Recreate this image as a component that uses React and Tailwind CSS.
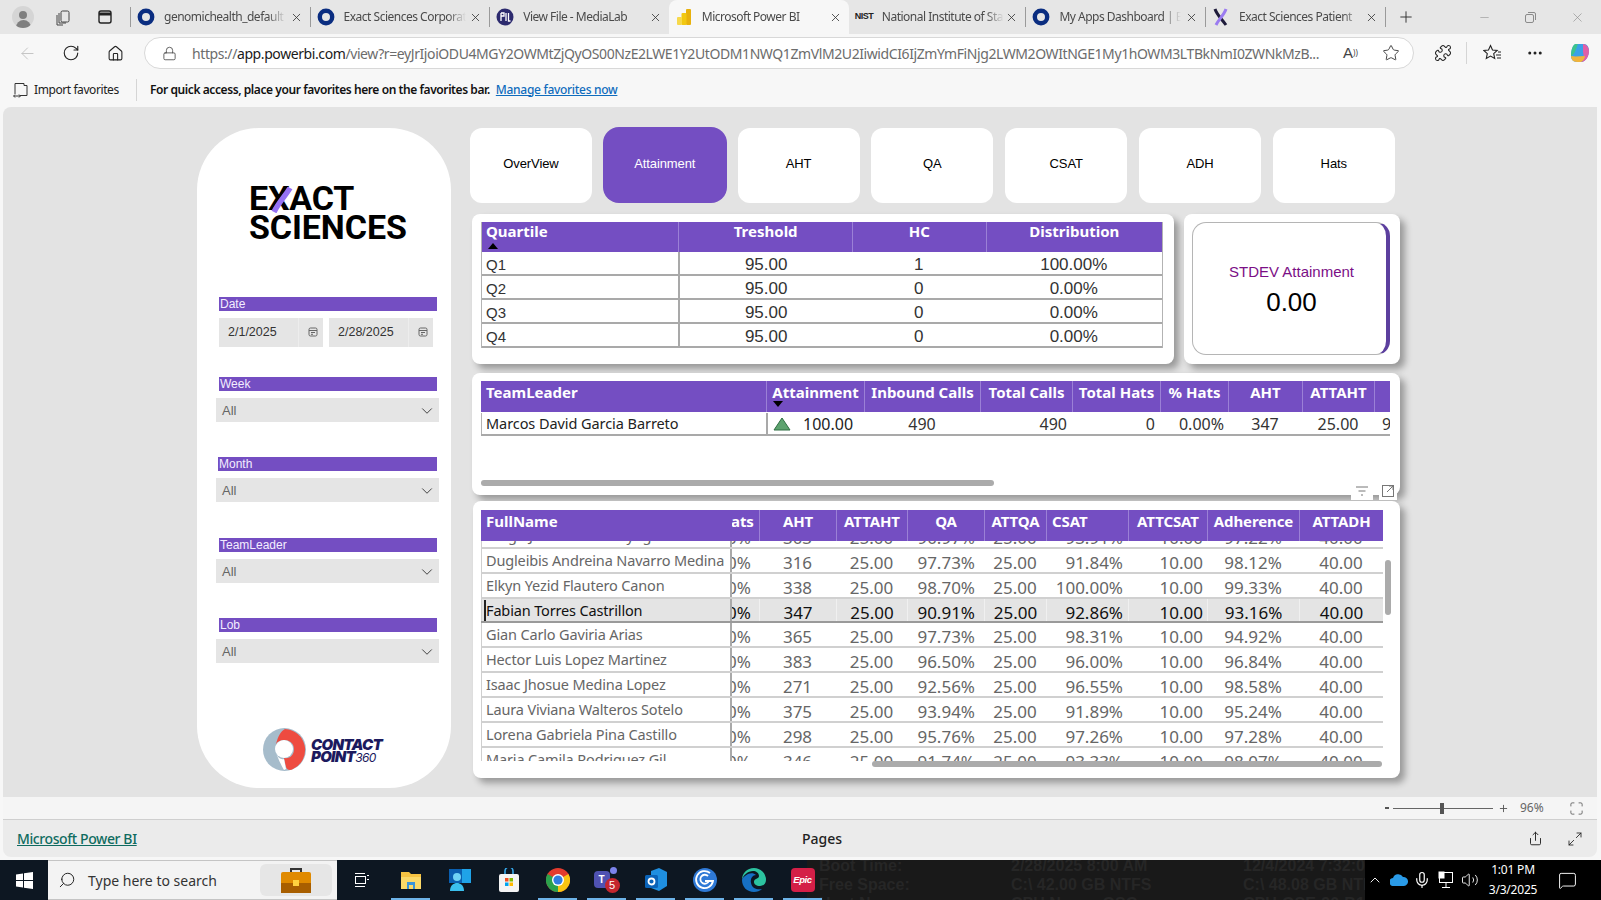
import React from "react";
import { ChevronDown, Minus, Plus, X, ArrowLeft, RotateCw, Home, Lock, Star, Puzzle, MoreHorizontal, Maximize, Search, ChevronUp, Mic, Volume2, MessageSquare, Share, Maximize2 } from "lucide-react";

const sans = "font-['Liberation_Sans',Arial,sans-serif]";
const ui = "font-['Noto_Sans','Open_Sans',sans-serif]";

function Ring() {
  return <svg width="18" height="18" viewBox="0 0 18 18"><circle cx="9" cy="9" r="6.2" fill="none" stroke="#0a2d80" strokeWidth="4.4" /></svg>;
}
function MediaLab() {
  return <svg width="18" height="18" viewBox="0 0 18 18"><circle cx="9" cy="9" r="8.5" fill="#2c2a6e" /><path d="M5 5v8M5 5h3v3H5M10 5v8M12.5 5v8h2" stroke="#fff" strokeWidth="1.3" fill="none" /></svg>;
}
function PowerBI() {
  return <svg width="18" height="18" viewBox="0 0 18 18"><rect x="11" y="1" width="5" height="16" rx="1" fill="#e8b10c" /><rect x="6.5" y="5" width="5" height="12" rx="1" fill="#f2c811" /><rect x="2" y="9" width="5" height="8" rx="1" fill="#f7d94c" /></svg>;
}
function Nist() {
  return <span className={`text-[9px] font-bold tracking-[-0.5px] text-[#222] ${sans} w-[18px] text-center`}>NIST</span>;
}
function XMark() {
  return <svg width="18" height="18" viewBox="0 0 18 18"><path d="M3 1c2 6 6 9 11 16" stroke="#1e1b3a" strokeWidth="3" fill="none" /><path d="M14 1C12 7 7 11 4 17" stroke="#9b7cf0" strokeWidth="3" fill="none" /></svg>;
}

function Tab({ icon, title, w = "w-[178.6px]", active }) {
  return (
    <div className={`relative flex h-[34px] ${w} shrink-0 items-center ${active ? "rounded-t-lg bg-[#f7f7f7]" : ""} pl-[6px] pr-[7px]`}>
      <span className="flex w-[18px] shrink-0 justify-center">{icon}</span>
      <span className={`ml-[9px] w-[122px] overflow-hidden whitespace-nowrap text-[12px] tracking-[-0.5px] text-[#4a4a4a] ${ui} [mask-image:linear-gradient(90deg,#000_85%,transparent)]`}>{title}</span>
      <X size={13} strokeWidth={1.5} className="ml-auto text-[#333]" />
    </div>
  );
}
const TabSep = () => <div className="h-[20px] w-px shrink-0 bg-[#9a9a9a]" />;

function TopChrome() {
  return (
    <>
      <div className="flex h-[34px] items-center bg-[#e6e6e6]">
        <div className="ml-[12px] flex h-[22px] w-[22px] shrink-0 flex-col items-center justify-end overflow-hidden rounded-full bg-[#d5d5d5]">
          <div className="h-[8px] w-[8px] rounded-full bg-[#7f7f7f]" />
          <div className="mt-px h-[8px] w-[15px] rounded-t-full bg-[#7f7f7f]" />
        </div>
        <svg className="ml-[20px] shrink-0" width="18" height="18" viewBox="0 0 18 18" fill="none" stroke="#444" strokeWidth="1"><rect x="7" y="3" width="8" height="11" rx="1.5" /><path d="M5 5v10h7M3 7v10h6" /></svg>
        <svg className="ml-[25px] shrink-0" width="16" height="16" viewBox="0 0 16 16" fill="none" stroke="#222" strokeWidth="1.4"><rect x="2" y="2" width="12" height="12" rx="2" /><path d="M2 5h12" strokeWidth="3" /></svg>
        <div className="ml-[17px]"><TabSep /></div>
        <Tab icon={<Ring />} title="genomichealth_default" />
        <TabSep />
        <Tab icon={<Ring />} title="Exact Sciences Corporate" />
        <TabSep />
        <Tab icon={<MediaLab />} title="View File - MediaLab" />
        <Tab icon={<PowerBI />} title="Microsoft Power BI" w="w-[180px]" active />
        <Tab icon={<Nist />} title="National Institute of Standards" w="w-[176.6px]" />
        <TabSep />
        <Tab icon={<Ring />} title="My Apps Dashboard | Exact" />
        <TabSep />
        <Tab icon={<XMark />} title="Exact Sciences Patient" />
        <TabSep />
        <Plus size={18} strokeWidth={1.3} className="ml-[11px] text-[#333]" />
        <div className="ml-[63px] flex items-center gap-[33px] text-[#8a8a8a]">
          <Minus size={13} strokeWidth={1} />
          <svg width="13" height="13" viewBox="0 0 13 13" fill="none" stroke="#8a8a8a"><rect x="1.5" y="3.5" width="8" height="8" rx="1.5" /><path d="M4 1.5h6a1.5 1.5 0 0 1 1.5 1.5v6" /></svg>
          <X size={15} strokeWidth={1} />
        </div>
      </div>
      <div className="flex h-[38px] items-center bg-[#f7f7f7]">
        <ArrowLeft size={19} strokeWidth={1.2} className="ml-[18px] text-[#c2c2c2]" />
        <RotateCw size={18} strokeWidth={1.5} className="ml-[25px] text-[#222]" />
        <Home size={17} strokeWidth={1.5} className="ml-[27px] text-[#222]" />
        <div className={`ml-[20px] flex h-[32px] w-[1270px] items-center rounded-full border border-[#d8d8d8] bg-white pl-[17px] text-[14px] ${ui}`}>
          <Lock size={15} strokeWidth={1.3} className="text-[#444]" />
          <span className="ml-[15px] w-[1130px] overflow-hidden whitespace-nowrap tracking-[-0.41px] text-[#6c6c6c]">https://<span className="text-[#1a1a1a]">app.powerbi.com</span>/view?r=eyJrIjoiODU4MGY2OWMtZjQyOS00NzE2LWE1Y2UtODM1NWQ1ZmVlM2U2IiwidCI6IjZmYmFiNjg2LWM2OWItNGE1My1hOWM3LTBkNmI0ZWNkMzB...</span>
          <span className={`ml-[21px] text-[15px] text-[#444] ${sans}`}>A</span>
          <span className="text-[8px] text-[#444]">))</span>
          <Star size={18} strokeWidth={1.2} className="ml-[24px] text-[#333]" />
        </div>
        <Puzzle size={18} strokeWidth={1.4} className="ml-[20px] text-[#222]" />
        <div className="ml-[14px] h-[22px] w-px bg-[#d5d5d5]" />
        <svg className="ml-[16px]" width="19" height="18" viewBox="0 0 19 18" fill="none" stroke="#222" strokeWidth="1.1"><path d="M7.5 1.5 9.5 6l4.7.5-3.5 3.2 1 4.8-4.2-2.4-4.2 2.4 1-4.8L.8 6.5 5.5 6z" /><path d="M13 11h5M14 14h4M15 8h3" /></svg>
        <MoreHorizontal size={18} className="ml-[24px] text-[#222]" />
        <svg className="ml-[24px]" width="24" height="24" viewBox="0 0 24 24"><path d="M8 3h8c3 0 5 3 5 7s-3 11-8 11H9C5 21 3 18 3 15 3 9 5 3 8 3z" fill="#3aa0e8" /><path d="M15 3c3 0 6 3 6 7 0 5-3 11-8 11 3-2 3-6 2-10z" fill="#e05fa8" /><path d="M3 15c0 3 2 6 6 6h4c2-1 4-4 4-6-5 0-9 1-14 0z" fill="#f0b43c" /><path d="M8 3C5 3 3 9 3 15c4-1 5-8 7-12z" fill="#3cc48c" /></svg>
      </div>
      <div className={`flex h-[35px] items-center bg-[#f7f7f7] text-[12px] ${ui}`}>
        <svg className="ml-[12px]" width="17" height="17" viewBox="0 0 17 17" fill="none" stroke="#333"><path d="M3 13V2.5h9v2h3v10H8" /><path d="M2 15h6M3 13.5 1.5 15 3 16.5M7 13.5 8.5 15 7 16.5" /></svg>
        <span className="ml-[5px] w-[86px] whitespace-nowrap tracking-[-0.42px] text-[#222]">Import favorites</span>
        <div className="ml-[16px] h-[22px] w-px bg-[#d5d5d5]" />
        <span className="ml-[13px] whitespace-nowrap font-semibold tracking-[-0.42px] text-[#111]">For quick access, place your favorites here on the favorites bar.</span>
        <span className="ml-[6px] whitespace-nowrap font-medium tracking-[-0.3px] text-[#0f6cbd] underline">Manage favorites now</span>
      </div>
    </>
  );
}

function SlicerTitle({ children, inset = "ml-[22px] mr-[14px]" }) {
  return <div className={`${inset} flex h-[14px] items-center bg-[#744ec2] pl-px text-[12px] leading-none text-[#f3edff] ${sans}`}>{children}</div>;
}
function Dropdown({ mt }) {
  return (
    <div className={`ml-[19px] mr-[12px] ${mt} flex h-[24px] items-center justify-between bg-[#e5e5e5] pl-[6px] pr-[3px] pt-px text-[13px] text-[#666] ${sans}`}>
      All
      <ChevronDown size={18} strokeWidth={1.2} className="text-[#333]" />
    </div>
  );
}
function DateBox({ value }) {
  return (
    <div className={`flex h-[29px] w-[104px] items-center bg-[#e5e5e5] pl-[9px] text-[12.5px] text-[#333] ${sans}`}>
      <span className="w-[70px]">{value}</span>
      <div className="flex h-full flex-1 items-center justify-center border-l border-[#ededed] pb-[2px] pl-[4px]">
        <svg width="10" height="10" viewBox="0 0 10 10" fill="none" stroke="#666"><rect x="1" y="1" width="8" height="8" rx="1.5" /><path d="M1 3.5h8M3 5.5h4M3 7.3h2" /></svg>
      </div>
    </div>
  );
}

function Sidebar() {
  return (
    <aside className="flex h-[660px] w-[254px] shrink-0 flex-col rounded-[62px] bg-white">
      <div className="relative ml-[54px] mt-[56px] h-[58px] font-['Roboto',sans-serif] text-[34px] font-bold leading-[29px] text-black">
        <div className="-ml-[2px] whitespace-nowrap tracking-[-0.2px]">EXACT</div>
        <div className="-ml-[2px] whitespace-nowrap tracking-[-0.1px]">SCIENCES</div>
        <svg className="absolute left-[20px] top-[3px]" width="22" height="26" viewBox="0 0 22 26"><path d="M19 1 C15 8 8 15 3 25" stroke="#9672f4" strokeWidth="5.5" fill="none" /></svg>
      </div>
      <div className="mt-[55px]"><SlicerTitle>Date</SlicerTitle></div>
      <div className="ml-[22px] mt-[7px] flex gap-[6px]"><DateBox value="2/1/2025" /><DateBox value="2/28/2025" /></div>
      <div className="mt-[30px]"><SlicerTitle>Week</SlicerTitle></div>
      <Dropdown mt="mt-[7px]" />
      <div className="mt-[35px]"><SlicerTitle inset="ml-[21px] mr-[14px]">Month</SlicerTitle></div>
      <Dropdown mt="mt-[7px]" />
      <div className="mt-[36px]"><SlicerTitle>TeamLeader</SlicerTitle></div>
      <Dropdown mt="mt-[7px]" />
      <div className="mt-[35px]"><SlicerTitle>Lob</SlicerTitle></div>
      <Dropdown mt="mt-[7px]" />
      <div className="ml-[66px] mt-[65px] flex items-center">
        <svg width="43" height="43" viewBox="0 0 43 43">
          <circle cx="21.5" cy="21.5" r="21.5" fill="#a6bccb" />
          <path d="M22 1a21 21 0 0 1 8 40c-3 2-6 1-7-2l-2-9c6 1 10-3 10-9s-5-9-10-9c-3 0-6 1-8 4 2-8 5-13 9-15z" fill="#ee4b40" />
          <circle cx="21" cy="21" r="9" fill="#fff" />
          <path d="M13 25c2 5 5 7 8 6l2 10-2 1c-3-5-6-12-8-17z" fill="#fff" />
        </svg>
        <div className="ml-[5px] pt-[3px] font-['Inter',sans-serif] italic leading-[12.5px] text-[#1c1a5e]">
          <div className="h-[12.5px] text-[15px] font-black tracking-[-0.7px]">CONTACT</div>
          <div className="h-[12.5px] text-[15px] font-black tracking-[-0.7px]">POINT<span className="text-[12px] font-normal">360</span></div>
        </div>
      </div>
    </aside>
  );
}

const navTabs = ["OverView", "Attainment", "AHT", "QA", "CSAT", "ADH", "Hats"];
function NavTabs() {
  return (
    <div className={`flex h-[75px] gap-[11.8px] pb-[3px] text-[13px] ${sans}`}>
      {navTabs.map((t) => (
        <div key={t} className={t === "Attainment" ? "-mx-px -mb-[3px] -mt-px flex w-[124px] items-center justify-center rounded-2xl bg-[#744ec2] pb-[3px] tracking-[-0.1px] text-white" : "-mb-[3px] flex w-[122px] items-center justify-center rounded-xl bg-white pb-[3px] tracking-[-0.1px] text-black"}>{t}</div>
      ))}
    </div>
  );
}

const cardShadow = "shadow-[5px_5px_7px_rgba(0,0,0,0.33)]";
const thFont = `${ui} text-[15px] font-bold text-white whitespace-nowrap`;

function QuartileTable() {
  const rows = [["Q1", "95.00", "1", "100.00%"], ["Q2", "95.00", "0", "0.00%"], ["Q3", "95.00", "0", "0.00%"], ["Q4", "95.00", "0", "0.00%"]];
  const cols = ["w-[197px]", "w-[174px]", "w-[134px]", "w-[177px]"];
  return (
    <div className={`h-[150px] w-[702px] rounded-lg bg-white pl-[9px] pt-[8px] ${cardShadow}`}>
      <div className="w-[682px] border-x border-[#b3b3b3]">
        <div className="flex h-[30px] bg-[#744ec2]">
          {["Quartile", "Treshold", "HC", "Distribution"].map((h, i) => (
            <div key={h} className={`relative ${cols[i]} ${i ? "border-l border-[#9b80d6] text-center" : "pl-[4px]"} ${thFont} leading-[18px]`}>
              {h}
              {i === 0 && <span className="absolute bottom-[3px] left-[6px] h-0 w-0 border-x-[5px] border-b-[6px] border-x-transparent border-b-black" />}
            </div>
          ))}
        </div>
        {rows.map((r) => (
          <div key={r[0]} className={`flex h-[24px] border-b-2 border-[#a9a9a9] text-[17px] text-[#333] ${sans}`}>
            {r.map((c, i) => (
              <div key={i} className={`h-[22px] ${cols[i]} pt-[2px] leading-[21px] ${i ? "text-center" : "pl-[4px] text-[15px]"} ${i === 1 ? "border-l-2 border-[#a9a9a9]" : ""}`}>{c}</div>
            ))}
          </div>
        ))}
      </div>
    </div>
  );
}

function StdevCard() {
  return (
    <div className={`ml-[10px] h-[150px] w-[216px] rounded-lg bg-white pl-[8px] pt-[8px] ${cardShadow}`}>
      <div className={`flex h-[133px] w-[198px] flex-col items-center justify-center rounded-[14px] border border-[#b5b5b5] border-r-[4px] border-r-[#5c3f9e] pl-[4px] ${sans}`}>
        <div className="mt-[6px] text-[15px] text-[#7b0f86]">STDEV Attainment</div>
        <div className="-mt-px text-[26px] text-black">0.00</div>
      </div>
    </div>
  );
}

const leaderCols = [
  ["TeamLeader", "w-[285px] pl-[5px]"],
  ["Attainment", "w-[98px]"],
  ["Inbound Calls", "w-[116px]"],
  ["Total Calls", "w-[92px]"],
  ["Total Hats", "w-[88px]"],
  ["% Hats", "w-[68px]"],
  ["AHT", "w-[74px]"],
  ["ATTAHT", "w-[72px]"],
];

function LeaderCard() {
  return (
    <div className={`relative mt-[9px] h-[122px] w-[928px] rounded-lg bg-white pl-[9px] pt-[8px] ${cardShadow}`}>
      <div className="w-[909px] overflow-hidden">
        <div className="flex h-[31px] bg-[#744ec2]">
          {leaderCols.map(([h, w], i) => (
            <div key={h} className={`relative shrink-0 ${w} ${i ? "border-l border-[#9b80d6] text-center" : ""} ${thFont} leading-[23px]`}>
              {h}
              {i === 1 && <span className="absolute bottom-[5px] left-[6px] h-0 w-0 border-x-[5px] border-t-[6px] border-x-transparent border-t-black" />}
            </div>
          ))}
          <div className="flex-1 border-l border-[#9b80d6]" />
        </div>
        <div className={`flex h-[24px] items-center border-b-2 border-[#a9a9a9] pt-px text-[16px] text-[#333] whitespace-nowrap ${ui}`}>
          <div className="w-[285px] shrink-0 border-l border-[#b3b3b3] pl-[4px] text-[14.5px] tracking-[-0.07px] text-[#222]">Marcos David Garcia Barreto</div>
          <div className="flex h-full w-[98px] shrink-0 items-center border-l-2 border-[#a9a9a9] pl-[5px]">
            <svg width="18" height="14" viewBox="0 0 18 14"><path d="M9 1 17 13H1z" fill="#5da36f" stroke="#2f6e42" /></svg>
            <span className="ml-[12px] text-[#222]">100.00</span>
          </div>
          <div className="w-[116px] shrink-0 px-[5px] text-center">490</div>
          <div className="w-[92px] shrink-0 pr-[5px] text-right">490</div>
          <div className="w-[88px] shrink-0 pr-[5px] text-right">0</div>
          <div className="w-[68px] shrink-0 pr-[4px] text-right">0.00%</div>
          <div className="w-[74px] shrink-0 text-center">347</div>
          <div className="w-[72px] shrink-0 text-center">25.00</div>
          <div className="pl-[8px]">93.94%</div>
        </div>
        <div className="mt-[44px] h-[6px] w-[513px] rounded-full bg-[#ababab]" />
      </div>
      <div className="absolute right-[3px] top-[108px] z-10 flex gap-[6px]">
        <div className="flex h-[19px] w-[22px] items-center justify-center bg-white text-[#777]"><svg width="14" height="12" viewBox="0 0 14 12" stroke="#777"><path d="M1 2h12M3.5 6h7M6 10h2" /></svg></div>
        <div className="flex h-[19px] w-[18px] items-center justify-center bg-white"><svg width="14" height="14" viewBox="0 0 14 14" fill="none" stroke="#777"><rect x="1.5" y="1.5" width="11" height="11" /><path d="M6 8l6-6M8 2h4v4" /></svg></div>
      </div>
    </div>
  );
}

const agentCols = [
  ["ats", "w-[27px]"], ["AHT", "w-[77px]"], ["ATTAHT", "w-[71px]"], ["QA", "w-[77px]"], ["ATTQA", "w-[62px]"],
  ["CSAT", "w-[82px]"], ["ATTCSAT", "w-[79px]"], ["Adherence", "w-[92px]"], ["ATTADH", "w-[84px]"],
];
const agents = [
  ["Diego Jose Ramirez Ayoga", "0%", "303", "90.97%", "93.91%", "97.22%"],
  ["Dugleibis Andreina Navarro Medina", "0%", "316", "97.73%", "91.84%", "98.12%"],
  ["Elkyn Yezid Flautero Canon", "0%", "338", "98.70%", "100.00%", "99.33%"],
  ["Fabian Torres Castrillon", "0%", "347", "90.91%", "92.86%", "93.16%", true],
  ["Gian Carlo Gaviria Arias", "0%", "365", "97.73%", "98.31%", "94.92%"],
  ["Hector Luis Lopez Martinez", "0%", "383", "96.50%", "96.00%", "96.84%"],
  ["Isaac Jhosue Medina Lopez", "0%", "271", "92.56%", "96.55%", "98.58%"],
  ["Laura Viviana Walteros Sotelo", "0%", "375", "93.94%", "91.89%", "95.24%"],
  ["Lorena Gabriela Pina Castillo", "0%", "298", "95.76%", "97.26%", "97.28%"],
  ["Maria Camila Rodriguez Gil", "0%", "346", "91.74%", "93.33%", "98.07%"],
];

function AgentRow({ a }) {
  const sel = a[6];
  const cells = [a[1], a[2], "25.00", a[3], "25.00", a[4], "10.00", a[5], "40.00"];
  const cls = ["overflow-hidden text-left -indent-[5px]", "text-center", "text-center", "text-right pr-[9px]", "text-center", "text-right pr-[5px]", "text-right pr-[4px]", "text-center", "text-center"];
  return (
    <div className={`flex h-[24.85px] items-center border-b-2 ${sel ? "border-b-[#9a9a9a] bg-[#e4e4e4] text-[#111]" : "border-[#d0d0d0] text-[#666]"} whitespace-nowrap ${ui}`}>
      <div className="relative h-full w-[251px] shrink-0 overflow-hidden border-l border-r-2 border-l-[#cfcfcf] border-r-[#a9a9a9] pl-[4px] pt-px text-[14.5px] leading-[21px] tracking-[-0.15px]">
        {sel && <span className="absolute left-[2px] top-[1px] h-[21px] w-[2px] bg-[#222]" />}
        {a[0]}
      </div>
      {cells.map((c, i) => (
        <div key={i} className={`${agentCols[i][1]} h-full shrink-0 ${i > 0 && sel ? "border-l border-[#f0f0f0]" : ""} ${cls[i]} pt-px text-[17px] leading-[25px]`}>{c}</div>
      ))}
    </div>
  );
}

function AgentCard() {
  return (
    <div className={`relative ml-px mt-[6px] h-[277px] w-[927px] rounded-lg bg-white pl-[8px] pt-[9px] ${cardShadow}`}>
      <div className="w-[902px]">
        <div className="relative z-10 flex h-[31px] bg-[#744ec2]">
          <div className={`w-[251px] shrink-0 pl-[5px] ${thFont} leading-[23px]`}>FullName</div>
          {agentCols.map(([h, w], i) => (
            <div key={h} className={`${w} shrink-0 ${i > 0 ? "border-l border-[#9b80d6]" : ""} ${h === "CSAT" ? "pl-[5px]" : "text-center"} ${thFont} leading-[23px] tracking-[-0.1px] ${h === "ats" ? "overflow-hidden text-left -indent-[1px]" : ""}`}>{h}</div>
          ))}
        </div>
        <div className="h-[220px] overflow-hidden">
          <div className="-mt-[17px]">
            {agents.map((a) => <AgentRow key={a[0]} a={a} />)}
          </div>
        </div>
        <div className="ml-[391px] h-[6px] w-[510px] rounded-full bg-[#ababab]" />
      </div>
      <div className="absolute right-[9px] top-[59px] h-[55px] w-[6px] rounded-full bg-[#ababab]" />
    </div>
  );
}

function Report() {
  return (
    <div className="ml-[3px] mr-[4px] flex h-[690px] rounded-tl-lg bg-[#e3e3e3] pl-[194px] pt-[21px]">
      <Sidebar />
      <div className="ml-[19px] flex flex-col">
        <NavTabs />
        <div className="ml-[2px] mt-[11px]">
          <div className="flex"><QuartileTable /><StdevCard /></div>
          <LeaderCard />
          <AgentCard />
        </div>
      </div>
    </div>
  );
}

function Footer() {
  return (
    <div className={`ml-[3px] mr-[4px] ${ui}`}>
      <div className="flex h-[23px] items-center justify-end border-b border-[#cfcfcf] bg-[#f5f5f5] pr-[13px] text-[12px] text-[#666]">
        <span className="h-[2px] w-[4px] bg-[#555]" />
        <div className="relative ml-[4px] h-px w-[100px] bg-[#666]"><span className="absolute left-[47px] -top-[5px] h-[11px] w-[4px] bg-[#555]" /></div>
        <Plus size={11} className="ml-[5px] text-[#555]" />
        <span className="ml-[11px] w-[49px]">96%</span>
        <Maximize size={15} strokeWidth={1.3} className="text-[#555]" />
      </div>
      <div className="flex h-[37px] items-center rounded-b-lg bg-[#ebebeb] text-[14px]">
        <span className="ml-[14px] w-[120px] whitespace-nowrap font-medium tracking-[-0.4px] text-[#0f6b60] underline">Microsoft Power BI</span>
        <span className="ml-[665px] w-[40px] font-medium text-[#222]">Pages</span>
        <Share size={15} strokeWidth={1.5} className="ml-[686px] text-[#222]" />
        <Maximize2 size={16} strokeWidth={1.3} className="ml-[24px] text-[#222]" />
      </div>
    </div>
  );
}

function TaskIcon({ children, active }) {
  return (
    <div className="relative z-10 flex h-[40px] w-[49px] shrink-0 items-center justify-center">
      {children}
      {active && <span className="absolute bottom-0 left-[5px] right-[5px] h-[2px] bg-[#6db3e8]" />}
    </div>
  );
}

function Taskbar() {
  return (
    <div className="relative mt-[3px] flex h-[40px] items-center overflow-hidden bg-[#0d1722] text-white">
      <div className="flex w-[48px] shrink-0 justify-center">
        <svg width="17" height="17" viewBox="0 0 17 17" fill="#fff"><path d="M0 2.4 7 1.4v6.6H0zM8 1.2 17 0v8H8zM0 9h7v6.6l-7-1zM8 9h9v8l-9-1.2z" /></svg>
      </div>
      <div className={`flex h-[40px] w-[289px] shrink-0 items-center border-y border-[#c4c4c4] bg-[#f3f3f3] pl-[10px] text-[14px] text-[#333] ${ui}`}>
        <Search size={18} strokeWidth={1.3} className="-scale-x-100 text-[#222]" />
        <span className="ml-[12px] whitespace-nowrap">Type here to search</span>
        <div className="ml-auto mr-[5px] flex h-[32px] w-[72px] items-center justify-center rounded-md bg-[#e6e6e6]">
          <svg width="30" height="26" viewBox="0 0 30 26"><path d="M10 5V2h10v3" stroke="#333" strokeWidth="2" fill="none" /><rect y="5" width="30" height="21" rx="2" fill="#e08a00" /><rect y="16" width="30" height="10" fill="#a85e00" /><rect x="12" y="13" width="6" height="6" fill="#ffd23f" /></svg>
        </div>
      </div>
      <TaskIcon>
        <svg width="16" height="16" viewBox="0 0 16 16" fill="none" stroke="#fff"><rect x="1.5" y="4.5" width="10" height="7" /><path d="M1 1.5h10M1 14.5h10" /><path d="M14 3v1M14 7v1" strokeWidth="2" /></svg>
      </TaskIcon>
      <TaskIcon active>
        <svg width="22" height="22" viewBox="0 0 22 22"><path d="M1 3h8l2 2h10v15H1z" fill="#f6c342" /><rect x="1" y="8" width="20" height="12" fill="#fbd968" /><rect x="7" y="13" width="8" height="7" fill="#3a94d8" /><rect x="9" y="16" width="4" height="4" fill="#fbd968" /></svg>
      </TaskIcon>
      <TaskIcon>
        <svg width="24" height="24" viewBox="0 0 24 24"><rect x="1" y="1" width="13" height="14" fill="#0a5fb0" /><rect x="14" y="1" width="9" height="14" fill="#1fa3e8" /><circle cx="9" cy="9" r="4" fill="#6fd3f5" /><path d="M2 23c0-6 4-8 7-8s7 2 7 8z" fill="#3bc0ee" /></svg>
      </TaskIcon>
      <TaskIcon>
        <svg width="22" height="24" viewBox="0 0 22 24"><path d="M7 6V3a4 4 0 0 1 8 0v3" stroke="#35a6e8" strokeWidth="1.6" fill="none" /><rect x="1" y="6" width="20" height="18" rx="2" fill="#f4f4f4" /><rect x="7" y="10" width="3.5" height="3.5" fill="#f25022" /><rect x="11.5" y="10" width="3.5" height="3.5" fill="#7fba00" /><rect x="7" y="14.5" width="3.5" height="3.5" fill="#00a4ef" /><rect x="11.5" y="14.5" width="3.5" height="3.5" fill="#ffb900" /></svg>
      </TaskIcon>
      <TaskIcon active>
        <svg width="24" height="24" viewBox="0 0 24 24"><circle cx="12" cy="12" r="12" fill="#e33b2e" /><path d="M12 12 22.4 6A12 12 0 0 1 12 24z" fill="#f9c412" /><path d="M12 12 12 24A12 12 0 0 1 1.6 6z" fill="#2ba24c" /><circle cx="12" cy="12" r="6" fill="#fff" /><circle cx="12" cy="12" r="4.6" fill="#2f7de1" /></svg>
      </TaskIcon>
      <TaskIcon active>
        <div className="relative h-[26px] w-[26px]">
          <span className={`absolute left-0 top-[4px] flex h-[17px] w-[16px] items-center justify-center rounded-sm bg-[#4f52b2] text-[10px] font-bold text-white ${sans}`}>T</span>
          <span className="absolute right-[3px] top-0 h-[7px] w-[7px] rounded-full bg-[#7b83eb]" />
          <span className={`absolute bottom-0 right-0 flex h-[15px] w-[15px] items-center justify-center rounded-full bg-[#c4262e] text-[11px] text-white ${sans}`}>5</span>
        </div>
      </TaskIcon>
      <TaskIcon active>
        <svg width="24" height="24" viewBox="0 0 24 24"><path d="M7 3 15 0l8 4v14l-8 5-8-3z" fill="#1f8fe0" /><rect x="1" y="7" width="13" height="13" rx="1.5" fill="#0a63b8" /><circle cx="7.5" cy="13.5" r="3" fill="none" stroke="#fff" strokeWidth="1.8" /></svg>
      </TaskIcon>
      <TaskIcon active>
        <svg width="24" height="24" viewBox="0 0 24 24" fill="none"><circle cx="12" cy="12" r="12" fill="#2f79d6" /><path d="M17 5a8.5 8.5 0 1 0 3 8H12M15 8a4.5 4.5 0 1 0 1 5" stroke="#fff" strokeWidth="1.8" /></svg>
      </TaskIcon>
      <TaskIcon active>
        <svg width="24" height="24" viewBox="0 0 24 24"><path d="M12 0a12 12 0 0 1 12 12c0 4-3 6-6 6-4 0-6-2-6-4 0-4 5-3 5-6S14 3 11 3C6 3 1 7 0 12 0 5 5 0 12 0z" fill="#2cc3a0" /><path d="M0 12c0 7 5 12 12 12 3 0 6-1 8-3-4 1-10 0-11-6-1-5 2-8 5-8-3-3-8-2-11 1-2 1-3 3-3 4z" fill="#1670c4" /></svg>
      </TaskIcon>
      <TaskIcon active>
        <div className={`flex h-[24px] w-[24px] items-center justify-center rounded-sm bg-[#d41f47] text-[9.5px] font-bold italic tracking-[-0.4px] text-white ${sans}`}>Epic</div>
      </TaskIcon>
      <div className={`relative -ml-[20px] flex h-[40px] min-w-0 flex-1 overflow-hidden whitespace-nowrap bg-[#191919] pl-[12px] text-[16px] font-bold leading-[19px] text-[#262626] ${sans}`}>
        <div className="-mt-[4px] flex w-[192px] shrink-0 flex-col"><span>Boot Time:</span><span>Free Space:</span><span>Host Name:</span></div>
        <div className="-mt-[4px] flex w-[232px] shrink-0 flex-col"><span>2/28/2025 8:00 AM</span><span>C:\ 42.00 GB NTFS</span><span>CPU Name: GSC</span></div>
        <div className="-mt-[4px] flex flex-col"><span>12/4/2024 7:32:06</span><span>C:\ 48.08 GB NTFS</span><span>CPU-GSE-90-B1</span></div>
      </div>
      <div className={`flex h-[40px] w-[236px] shrink-0 items-center bg-black ${ui}`}>
        <ChevronUp size={16} strokeWidth={1.4} className="ml-[2px]" />
        <svg className="ml-[7px]" width="18" height="12" viewBox="0 0 18 12"><path d="M4 12a4 4 0 0 1-1-8 5.5 5.5 0 0 1 10-1 4.5 4.5 0 0 1 1 9z" fill="#2a9be8" /></svg>
        <Mic size={18} strokeWidth={1.6} className="ml-[5px]" />
        <svg className="ml-[7px]" width="16" height="18" viewBox="0 0 16 18" fill="none" stroke="#fff"><rect x="1.5" y="1.5" width="13" height="10" /><rect x="1" y="1" width="5" height="6" fill="#fff" /><path d="M8 12v4M4 16.5h8" /></svg>
        <Volume2 size={18} strokeWidth={1.2} className="ml-[7px]" />
        <div className="ml-[4px] w-[60px] text-center text-[12px] leading-[20px] tracking-[-0.2px]"><div>1:01 PM</div><div>3/3/2025</div></div>
        <MessageSquare size={19} strokeWidth={1.2} className="ml-[15px]" />
      </div>
    </div>
  );
}

export default function App() {
  return (
    <div className="h-[900px] w-[1601px] overflow-hidden bg-[#f7f7f7]">
      <TopChrome />
      <Report />
      <Footer />
      <div className="bg-white"><Taskbar /></div>
    </div>
  );
}
